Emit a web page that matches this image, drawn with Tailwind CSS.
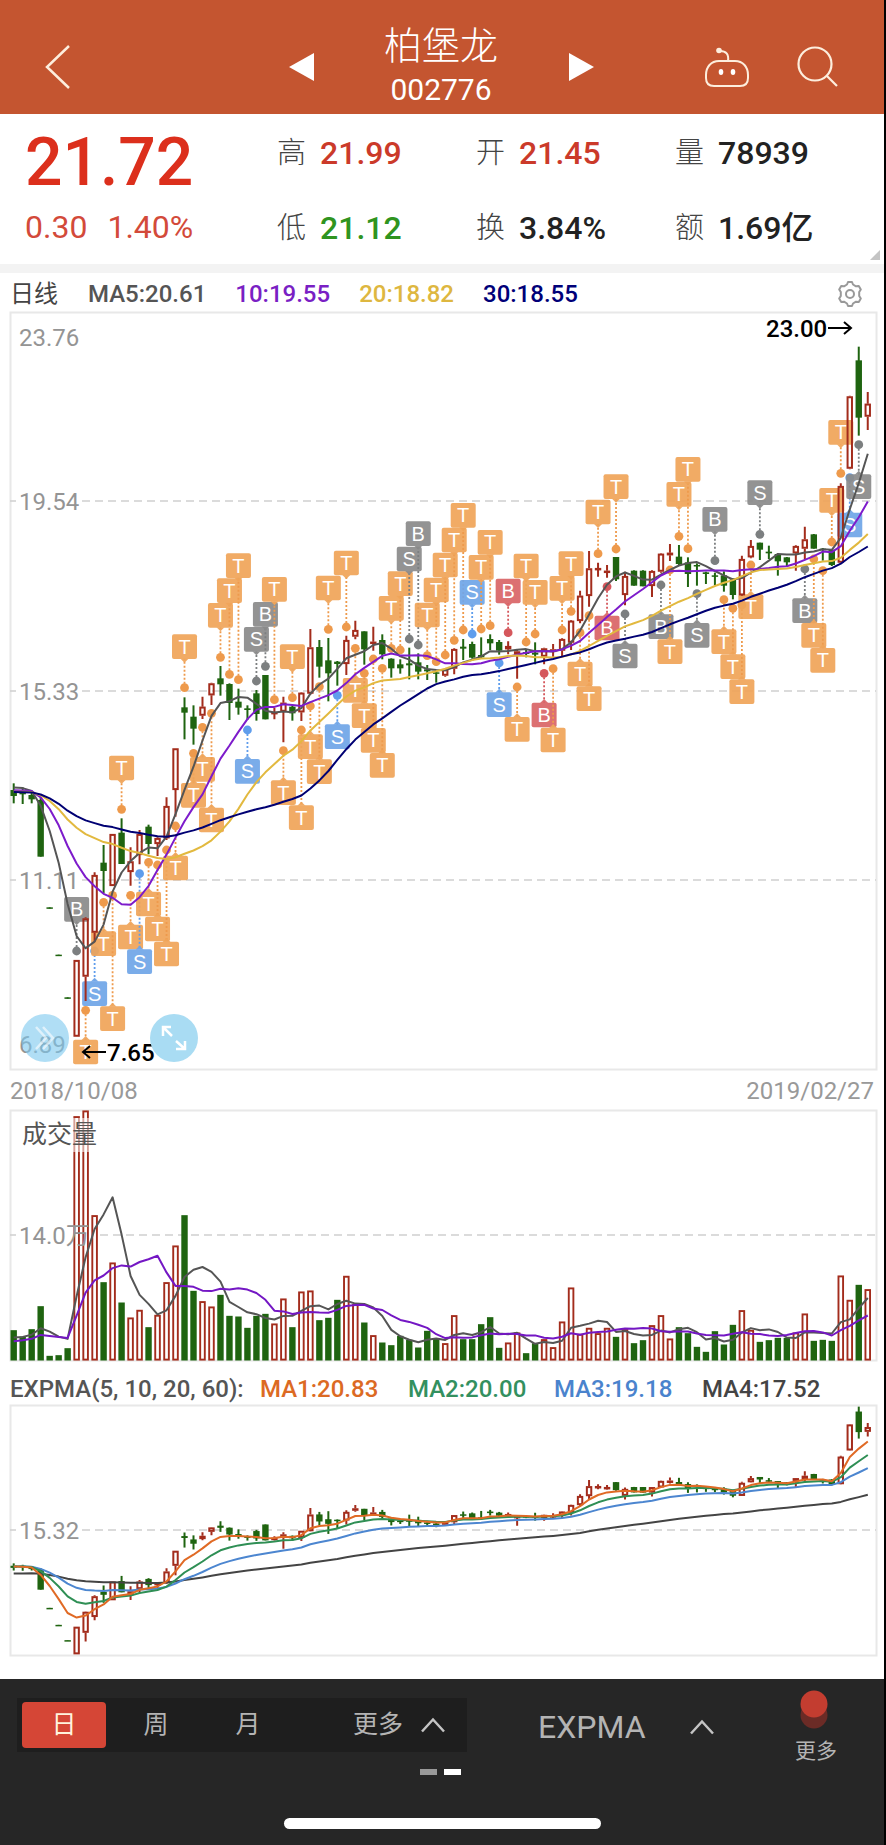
<!DOCTYPE html>
<html lang="zh-CN">
<head>
  <meta charset="UTF-8" />
  <meta name="viewport" content="width=device-width, initial-scale=1.0" />
  <title>柏堡龙 002776</title>
  <script src="https://cdn.jsdelivr.net/npm/@tailwindcss/browser@4"></script>
</head>
<body class="min-h-screen flex flex-col bg-white border-r-2 border-black font-['Roboto','Noto_Sans_CJK_SC',sans-serif] text-[#333]">

  <header class="h-[114px] bg-[#c45530] text-white flex items-center pl-11 pr-11 pt-5 shrink-0">
    <div class="flex-1 flex justify-between items-center pr-[54px]">
      <a href="#" aria-label="返回">
        <svg width="27" height="46" viewBox="0 0 27 46" fill="none" stroke="#fdeedd" stroke-width="2.5"><path d="M25 2 L3 23 L25 44" /></svg>
      </a>
      <button aria-label="上一只"><svg width="26" height="28" viewBox="0 0 26 28" fill="#fff"><path d="M25 0V28L0 14Z" /></svg></button>
    </div>
    <div class="w-[144px] text-center">
      <h1 class="text-[38px] leading-[46px] font-light">柏堡龙</h1>
      <p class="text-[30px] leading-[42px]">002776</p>
    </div>
    <div class="flex-1 flex justify-between items-center pl-14">
      <button aria-label="下一只"><svg width="26" height="28" viewBox="0 0 26 28" fill="#fff"><path d="M0 0V28L25 14Z" /></svg></button>
      <div class="flex items-center gap-[46px]">
        <button aria-label="助手">
          <svg width="46" height="42" viewBox="0 0 46 42" fill="none" stroke="#fdeedd" stroke-width="2">
            <path d="M15 15 H31 C39 15 44 21 44 29 V32 C44 37 41 40 36 40 H10 C5 40 2 37 2 32 V29 C2 21 7 15 15 15Z" />
            <path d="M24 15 C25 8 22 5 16 5" />
            <circle cx="15" cy="4.500" r="2.800" fill="#fdeedd" stroke="none" />
            <ellipse cx="17" cy="26" rx="2.300" ry="3" fill="#fff" stroke="none" />
            <ellipse cx="29" cy="26" rx="2.300" ry="3" fill="#fff" stroke="none" />
          </svg>
        </button>
        <button aria-label="搜索">
          <svg width="44" height="42" viewBox="0 0 44 42" fill="none" stroke="#fdeedd" stroke-width="2.2"><circle cx="19" cy="18" r="16.5" /><path d="M31 30 L41 40" /></svg>
        </button>
      </div>
    </div>
  </header>

  <section class="relative h-[150px] shrink-0 flex pl-[25px] pt-3">
    <div class="w-[252px]">
      <p class="text-[66px] leading-[74px] font-medium text-[#dc2f1c]">21.72</p>
      <p class="text-[32px] leading-[54px] text-[#d34a3a] flex gap-5"><span>0.30</span><span>1.40%</span></p>
    </div>
    <dl class="flex-1 grid grid-cols-[199px_199px_1fr] auto-rows-[75px] text-[32px] leading-[54px] text-[#222]">
      <div class="flex gap-[14px]"><dt class="text-[29px] font-light text-[#444]">高</dt><dd class="font-medium text-[#cb3a2a]">21.99</dd></div>
      <div class="flex gap-[14px]"><dt class="text-[29px] font-light text-[#444]">开</dt><dd class="font-medium text-[#cb3a2a]">21.45</dd></div>
      <div class="flex gap-[14px]"><dt class="text-[29px] font-light text-[#444]">量</dt><dd class="font-medium">78939</dd></div>
      <div class="flex gap-[14px]"><dt class="text-[29px] font-light text-[#444]">低</dt><dd class="font-medium text-[#2f9420]">21.12</dd></div>
      <div class="flex gap-[14px]"><dt class="text-[29px] font-light text-[#444]">换</dt><dd class="font-medium">3.84%</dd></div>
      <div class="flex gap-[14px]"><dt class="text-[29px] font-light text-[#444]">额</dt><dd class="font-medium">1.69亿</dd></div>
    </dl>
    <svg class="absolute right-1 bottom-1" width="10" height="10" viewBox="0 0 10 10"><path d="M10 0V10H0Z" fill="#c4c4c4" /></svg>
  </section>

  <div class="h-[9px] bg-[#f3f3f3] shrink-0"></div>

  <div class="h-[39px] shrink-0 flex items-center pl-[10px] pr-5 pt-[3px] text-2xl font-medium">
    <span class="mr-[30px] font-normal text-[#444]">日线</span>
    <span class="mr-[29px] text-[#555]">MA5:20.61</span>
    <span class="mr-[29px] text-[#7a1fc4]">10:19.55</span>
    <span class="mr-[29px] text-[#deb740]">20:18.82</span>
    <span class="text-[#000078]">30:18.55</span>
    <button class="ml-auto" aria-label="设置">
      <svg width="28" height="28" viewBox="0 0 28 28" fill="none" stroke="#999" stroke-width="2" stroke-linejoin="round">
        <path d="M11 4.5 L12 2 H16 L17 4.5 L20 6.3 L22.8 6 L24.8 9.4 L23.2 12 V16 L24.8 18.6 L22.8 22 L20 21.7 L17 23.5 L16 26 H12 L11 23.5 L8 21.7 L5.2 22 L3.2 18.6 L4.8 16 V12 L3.2 9.4 L5.2 6 L8 6.3Z" />
        <circle cx="14" cy="14" r="4" />
      </svg>
    </button>
  </div>

  <main class="pl-[10px] pr-[7px]">
    <div class="relative">
      <svg id="kline" class="block w-full h-auto overflow-visible" viewBox="0 0 867 758"></svg>
      <button class="absolute left-[11px] bottom-2 size-12 rounded-full bg-[#7cc8ee]/60 flex items-center justify-center" aria-label="展开">
        <svg width="26" height="26" viewBox="0 0 26 26" fill="none" stroke="#fff" stroke-width="2.5" opacity=".6"><path d="M4 2 L14 13 L4 24 M11 2 L21 13 L11 24" /></svg>
      </button>
      <button class="absolute left-[140px] bottom-2 size-12 rounded-full bg-[#a9dcf3] flex items-center justify-center" aria-label="全屏">
        <svg width="26" height="26" viewBox="0 0 26 26" fill="none" stroke="#fff" stroke-width="2.5"><path d="M2 11V2H10 M2 2L11 11 M24 16V24H15 M24 24L15 16" /></svg>
      </button>
    </div>
    <div class="h-10 flex items-center justify-between pr-[3px] pt-[2px] text-2xl text-[#999]">
      <time>2018/10/08</time><time>2019/02/27</time>
    </div>
    <svg id="volume" class="block w-full h-auto overflow-visible" viewBox="0 0 867 251"></svg>
    <div class="h-11 flex items-center pt-3 text-2xl font-medium text-[#555]">
      <span class="w-[250px] whitespace-nowrap">EXPMA(5, 10, 20, 60):</span>
      <span class="w-[148px] text-[#dc6a23]">MA1:20.83</span>
      <span class="w-[146px] text-[#33905f]">MA2:20.00</span>
      <span class="w-[148px] text-[#4a83cd]">MA3:19.18</span>
      <span class="text-[#444]">MA4:17.52</span>
    </div>
    <svg id="expma" class="block w-full h-auto overflow-visible" viewBox="0 0 867 251"></svg>
  </main>

  <footer class="mt-[23px] flex-1 bg-[#262626] text-[#b4b4b4]">
    <div class="flex pl-[17px] h-[90px]">
      <nav class="mt-[19px] h-[54px] w-[450px] bg-[#1e1e1e] flex items-center pl-[5px] text-[25px]">
        <button class="w-[84px] h-[46px] rounded bg-[#d54636] text-[#fff3dd]">日</button>
        <button class="w-[100px]">周</button>
        <button class="w-[84px]">月</button>
        <button class="ml-[63px] flex items-center gap-[17px]">更多
          <svg width="26" height="16" viewBox="0 0 26 16" fill="none" stroke="#c4c4c4" stroke-width="2.5"><path d="M2 14.5L13 2.5L24 14.5" /></svg>
        </button>
      </nav>
      <button class="ml-[71px] mt-[19px] h-[54px] flex items-center gap-[43px] pt-[3px] text-[32px]">EXPMA
        <svg width="26" height="16" viewBox="0 0 26 16" fill="none" stroke="#c4c4c4" stroke-width="2.5"><path d="M2 14.5L13 2.5L24 14.5" /></svg>
      </button>
      <button class="ml-auto mr-[47px] mt-[11px] flex flex-col items-center text-[21px] leading-[30px]">
        <svg width="32" height="42" viewBox="0 0 32 42"><circle cx="14" cy="25" r="13.5" fill="#6b2b26" /><circle cx="14" cy="14" r="13.5" fill="#c33d30" /></svg>
        <span class="mt-1">更多</span>
      </button>
    </div>
    <div class="flex justify-center gap-[7px] pr-1">
      <i class="w-[17px] h-[6px] bg-[#999]"></i><i class="w-[17px] h-[6px] bg-white"></i>
    </div>
    <div class="mt-[43px] mx-auto w-[317px] h-[11px] rounded-full bg-white"></div>
  </footer>

  <script>
    // one candle: color, high, body top, body bottom, low (in 1/135 yuan below 23.76)
    const candles = `
g 1414 1434 1452 1474|g 1426 1434 1447 1476|g 1442 1449 1462 1474|g 1456 1464 1634 1634
g 1786 1786 1790 1790|g 1928 1928 1932 1932|g 2056 2056 2060 2060|r 1944 1944 2174 2174
r 1816 1819 1994 2067|r 1681 1689 1862 1889|g 1599 1652 1677 1744|r 1566 1566 1722 1722
g 1519 1562 1656 1656|r 1606 1648 1680 1721|r 1554 1566 1629 1657|g 1538 1544 1596 1627
r 1576 1578 1596 1632|r 1456 1482 1579 1584|r 1309 1309 1434 1514|g 1156 1186 1202 1282
g 1180 1214 1250 1298|r 1154 1184 1211 1221|r 1112 1114 1150 1179|g 1062 1099 1117 1151
g 1114 1116 1173 1224|g 1130 1169 1187 1208|g 1180 1189 1194 1224|g 1134 1144 1206 1226
g 1089 1089 1222 1222|r 1187 1200 1204 1222|r 1154 1172 1199 1291|g 1181 1184 1204 1226
r 1141 1142 1201 1227|r 951 1006 1145 1148|g 984 1005 1064 1097|g 978 1045 1084 1168
g 1047 1049 1056 1121|r 971 984 1056 1089|r 926 954 974 982|g 958 958 1012 1058
r 944 989 994 1016|g 967 984 1027 1042|g 1039 1040 1069 1097|g 1042 1057 1069 1085
g 1007 1054 1060 1102|g 1024 1051 1079 1102|g 1059 1072 1078 1104|g 1077 1081 1085 1112
r 1069 1072 1091 1094|r 1009 1011 1070 1087|g 981 1004 1010 1044|g 989 996 1037 1040
g 976 1029 1036 1040|g 967 981 994 1014|g 984 990 1016 1028|r 988 1002 1012 1027
r 1012 1018 1028 1100|g 1012 1020 1026 1036|g 991 1022 1028 1057|r 1007 1009 1034 1057
r 996 1012 1020 1034|r 979 981 1016 1034|r 924 926 992 1014|r 836 851 927 934
r 717 769 852 884|r 752 768 774 794|r 759 776 781 797|g 735 735 802 807
r 779 792 849 880|g 775 776 821 821|g 775 776 823 823|r 775 777 822 855
r 724 725 779 782|r 696 722 730 747|g 699 734 756 761|g 736 751 786 825
g 754 759 763 821|g 779 781 786 816|g 782 790 794 819|g 778 790 821 839
g 799 802 849 862|r 731 741 850 852|r 684 702 736 739|g 692 692 713 744
g 701 719 724 741|g 726 726 748 791|g 735 736 751 762|r 700 702 724 776
r 644 682 710 741|g 666 667 710 710|g 708 710 714 746|g 711 713 759 762
r 514 522 752 754|r 251 253 470 472|g 104 145 317 371|r 240 275 314 354`
      .trim().split(/[|\n]/).map(s => {
        const [c, ...v] = s.split(' ');
        const [h, t, b, l] = v.map(n => 23.76 - n / 135);
        return { c, h, t, b, l, close: c === 'r' ? t : b };
      });

    const vols = [91,72,94,163,14,16,37,733,750,436,235,294,174,129,152,100,137,235,345,436,209,178,162,197,134,132,
      98,134,140,111,186,100,207,210,121,128,182,254,169,114,76,54,46,74,62,39,89,67,52,136,64,64,109,130,38,54,84,
      22,52,64,40,117,219,80,98,82,98,71,94,52,61,106,136,66,100,82,41,26,88,48,107,151,92,56,61,68,68,84,141,59,62,
      59,255,182,227,214];

    // index, letter, kind, dot, badge centre
    const marks = [[7,'B','k',1917,1792],[8,'T','o',2095,2220],[9,'S','b',1917,2045],[10,'T','o',1771,1895],
      [11,'T','o',1750,2120],[12,'T','o',1492,1368],[13,'T','o',1750,1875],[14,'S','b',1685,1949],[15,'T','o',1651,1776],
      [16,'T','o',1659,1851],[17,'T','o',1614,1926],[18,'T','o',1542,1668],[19,'T','o',1127,1004],[20,'T','o',1324,1450],
      [21,'T','o',1246,1372],[22,'T','o',1204,1524],[23,'T','o',1036,910],[24,'T','o',1087,836],[25,'T','o',1103,761],
      [26,'S','b',1254,1378],[27,'S','k',1107,982],[28,'B','k',1063,907],[29,'T','o',1163,832],[30,'T','o',1316,1442],
      [31,'T','o',1157,1034],[32,'T','o',1254,1517],[33,'T','o',1182,1304],[34,'T','o',1124,1379],[35,'T','o',952,828],
      [36,'S','b',1150,1274],[37,'T','o',945,753],[38,'T','o',1009,1135],[39,'T','o',1084,1211],[40,'T','o',1041,1285],
      [41,'T','o',1069,1360],[42,'T','o',1009,889],[43,'T','o',1014,815],[44,'S','k',981,741],[45,'B','k',999,665],
      [46,'T','o',1031,909],[47,'T','o',1049,834],[48,'T','o',1029,759],[49,'T','o',985,684],[50,'T','o',954,610],
      [51,'S','b',966,841],[52,'T','o',951,766],[53,'T','o',941,691],[54,'S','b',1053,1178],[55,'B','r',962,837],
      [56,'T','o',1125,1252],[57,'T','o',990,762],[58,'T','o',966,841],[59,'B','r',1084,1209],[60,'T','o',1070,1284],
      [61,'T','o',954,829],[62,'T','o',898,755],[63,'T','o',962,1086],[64,'T','o',911,1160],[65,'T','o',725,600],
      [66,'B','r',824,948],[67,'T','o',711,524],[68,'S','k',906,1032],[72,'B','k',819,944],[73,'T','o',774,1019],
      [74,'T','o',673,547],[75,'T','o',710,472],[76,'S','k',845,970],[78,'B','k',746,622],[79,'T','o',863,989],
      [80,'T','o',889,1064],[81,'T','o',879,1139],[82,'T','o',759,884],[83,'S','k',667,542],[88,'B','k',771,896],
      [89,'T','o',741,970],[90,'T','o',776,1045],[91,'T','o',690,565],[92,'T','o',484,361],[93,'S','b',497,639],
      [94,'S','k',398,524]];

    const RED = '#a32c1c', GREEN = '#1f6410';
    const x = i => 3.7 + i * 8.99;
    const line = (pts, color, w = 2) =>
      `<polyline fill="none" stroke="${color}" stroke-width="${w}" stroke-linejoin="round" points="${pts.map((y, i) => x(i).toFixed(1) + ',' + y.toFixed(1)).join(' ')}"/>`;
    const frame = h => `<rect x=".5" y=".5" width="866" height="${h - 1}" fill="none" stroke="#e8e8e8" stroke-width="2"/>`;
    const grid = (y, from = 72) =>
      `<path d="M0 ${y}H6M${from} ${y}H866" fill="none" stroke="#cfcfcf" stroke-width="1.3" stroke-dasharray="8 5"/>`;
    const label = (y, s) => `<text x="9" y="${y + 9}" font-size="24" fill="#949494">${s}</text>`;

    function sma(data, n, seed) {
      const all = seed.concat(data);
      return data.map((_, i) => {
        const end = i + seed.length + 1;
        return all.slice(end - n, end).reduce((a, b) => a + b, 0) / n;
      });
    }

    function ema(data, n, start) {
      let prev = start;
      return data.map((v, i) => prev = i ? prev + (v - prev) * 2 / (n + 1) : start);
    }

    function drawCandles(py) {
      return candles.map((d, i) => {
        const t = py(d.t), b = py(d.b), h = py(d.h), l = py(d.l), cx = x(i);
        if (d.c === 'g')
          return `<path d="M${cx} ${h}V${l}" stroke="${GREEN}" stroke-width="2"/><rect x="${cx - 3.2}" y="${t}" width="6.4" height="${Math.max(b - t, 1.5)}" fill="${GREEN}"/>`;
        return `<path d="M${cx} ${h}V${t}M${cx} ${b}V${l}" stroke="${RED}" stroke-width="2"/><rect x="${cx - 2.2}" y="${t + .9}" width="4.4" height="${Math.max(b - t - 1.8, .5)}" fill="none" stroke="${RED}" stroke-width="2"/>`;
      }).join('');
    }

    function drawMarks() {
      const badge = { o: '#f0a55a', b: '#71a6e8', k: '#8b8b8b', r: '#da6668' };
      const dots = { o: '#ee9a4c', b: '#5f9dec', k: '#7c7f80', r: '#d5575c' };
      return marks.map(([i, s, k, dot, mid]) => {
        const cx = x(i), d = dot / 3, m = mid / 3, dir = d > m ? 1 : -1, e = m + dir * 12;
        return `<path d="M${cx} ${d}V${e}" stroke="${dots[k]}" stroke-width="1.8" stroke-dasharray="2 2"/>
          <circle cx="${cx}" cy="${d}" r="4.4" fill="${dots[k]}"/>
          <g opacity=".93"><rect x="${cx - 12.5}" y="${m - 12.3}" width="25" height="24.6" rx="2" fill="${badge[k]}"/>
          <path d="M${cx - 4} ${e}H${cx + 4}L${cx} ${e + dir * 4}Z" fill="${badge[k]}"/>
          <text x="${cx}" y="${m + 7}" font-size="20" text-anchor="middle" fill="#fff" font-family="Liberation Sans, sans-serif">${s}</text></g>`;
      }).join('');
    }

    const closes = candles.map(d => d.close);
    const py = p => (23.76 - p) * 45;
    const hist = Array(25).fill(13.07).concat([13.1, 13.25, 13.3, 13.3]);
    const ma = (n, color) => line(sma(closes, n, hist).map(py), color);
    document.getElementById('kline').innerHTML = frame(758) + grid(189) + grid(379) + grid(568)
      + label(25, '23.76') + label(189, '19.54') + label(379, '15.33') + label(568, '11.11') + label(732, '6.89')
      + drawMarks() + drawCandles(py)
      + ma(5, '#555') + ma(10, '#7d1bcb') + ma(20, '#e2b93f') + ma(30, '#000073')
      + `<g font-size="24" font-weight="500" fill="#000"><text x="756" y="25">23.00</text><text x="97" y="749">7.65</text></g>
         <path d="M818 16H841M834 10L841 16L834 22M96 740H73M80 734L73 740L80 746" fill="none" stroke="#000" stroke-width="2"/>`;

    const vy = v => 250.5 - v / 3;
    const bars = vols.map((v, i) => candles[i].c === 'g'
      ? `<rect x="${x(i) - 3.2}" y="${vy(v)}" width="6.4" height="${v / 3}" fill="${GREEN}"/>`
      : `<rect x="${x(i) - 2.3}" y="${vy(v) + .9}" width="4.6" height="${v / 3 - 1.8}" fill="none" stroke="${RED}" stroke-width="1.9"/>`).join('');
    const volHist = [47, 47, 47, 47, 47, 63, 63, 64, 64];
    document.getElementById('volume').innerHTML = frame(251) + grid(125, 90) + bars
      + line(sma(vols, 5, volHist).map(vy), '#555') + line(sma(vols, 10, volHist).map(vy), '#7417c4')
      + `<rect x="8" y="8" width="84" height="34" fill="#fff" opacity=".55"/><text x="12" y="33" font-size="25" fill="#555">成交量</text>`
      + label(125, '14.0万');

    const ey = p => 125.5 - (p - 15.32) * 16.15;
    document.getElementById('expma').innerHTML = frame(251) + grid(125) + label(125, '15.32') + drawCandles(ey)
      + line(ema(closes, 60, 12.65).map(ey), '#444') + line(ema(closes, 20, 13.1).map(ey), '#4c86d0')
      + line(ema(closes, 10, 13.1).map(ey), '#2f8f55') + line(ema(closes, 5, 13.1).map(ey), '#e06a25');
  </script>
</body>
</html>
